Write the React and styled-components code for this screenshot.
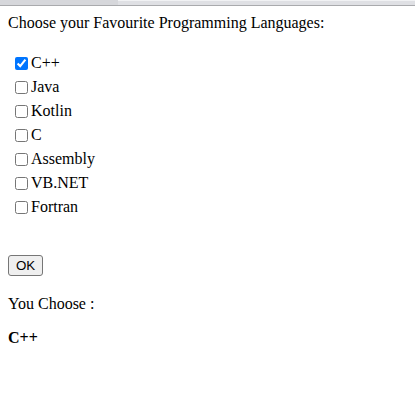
import React, { useState } from "react";
import styled, { createGlobalStyle } from "styled-components";

const GlobalStyle = createGlobalStyle`
	html, body {
		margin: 0;
		padding: 0;
		background: #fff;
	}
	body {
		font-family: "Liberation Serif", "Times New Roman", serif;
		font-size: 16px;
		color: #000;
	}
`;

const TopStrip = styled.div`
	display: flex;
	height: 5px;
	border-bottom: 1px solid #a9aaad;
`;

const StripPart = styled.div`
	flex: ${(p) => (p.$grow ? 1 : "0 0 118px")};
	background: ${(p) => p.$bg};
	border-top: 1px solid ${(p) => p.$top};
`;

const Page = styled.div`
	padding: 8px;
`;

const Title = styled.div`
	line-height: normal;
`;

const List = styled.div`
	display: flex;
	flex-direction: column;
	margin-top: 19px;
	padding-left: 3px;
`;

const Row = styled.label`
	display: flex;
	align-items: center;
	height: 24px;
`;

const Box = styled.input`
	width: 13px;
	height: 13px;
	margin: 0 3px 0 4px;
`;

const OkButton = styled.button`
	display: block;
	margin-top: 36px;
	font-family: "Liberation Sans", Arial, sans-serif;
	font-size: 13.33px;
	padding: 1px 7px;
	height: 21px;
	background: #efefef;
	border: 1px solid #767676;
	border-radius: 3px;
	color: #000;
`;

const Para = styled.p`
	margin: ${(p) => p.$top}px 0 0;
	line-height: normal;
	font-weight: ${(p) => (p.$bold ? 700 : 400)};
`;

const languages = ["C++", "Java", "Kotlin", "C", "Assembly", "VB.NET", "Fortran"];

export default function App() {
	const [picked, setPicked] = useState(["C++"]);
	const [shown, setShown] = useState(["C++"]);

	const toggle = (lang) =>
		setPicked((prev) =>
			prev.includes(lang) ? prev.filter((l) => l !== lang) : [...prev, lang]
		);

	return (
		<>
			<GlobalStyle />
			<TopStrip>
				<StripPart $bg="#d6d7db" $top="#d6d7db" />
				<StripPart $grow $bg="#dfe0e4" $top="#f1f2f4" />
			</TopStrip>
			<Page>
				<Title>Choose your Favourite Programming Languages:</Title>
				<List>
					{languages.map((lang) => (
						<Row key={lang}>
							<Box
								type="checkbox"
								checked={picked.includes(lang)}
								onChange={() => toggle(lang)}
							/>
							{lang}
						</Row>
					))}
				</List>
				<OkButton onClick={() => setShown(picked)}>OK</OkButton>
				<Para $top={19}>You Choose :</Para>
				<Para $top={16} $bold>
					{shown.join(", ")}
				</Para>
			</Page>
		</>
	);
}
